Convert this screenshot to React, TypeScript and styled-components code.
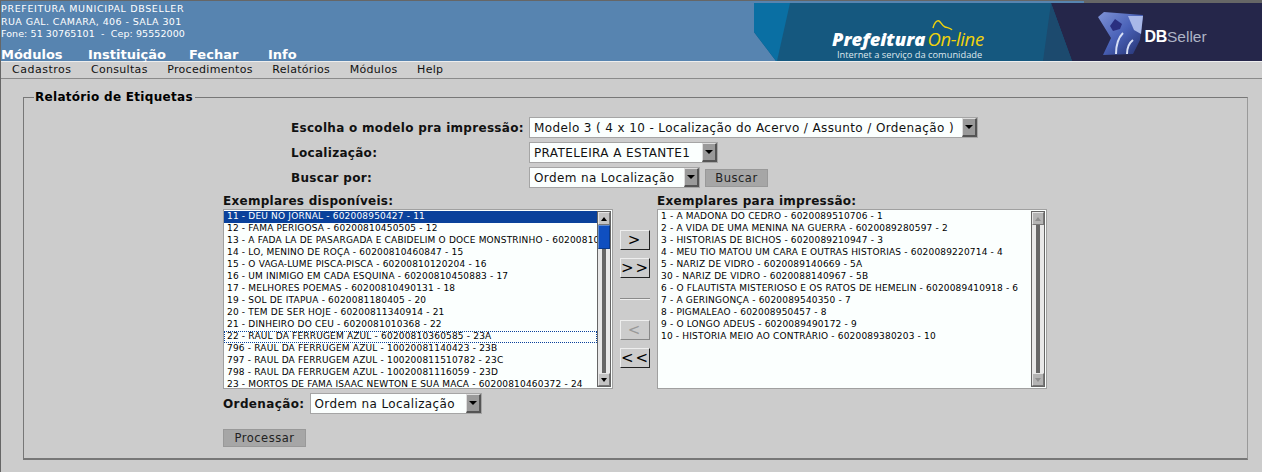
import styled, { createGlobalStyle } from 'styled-components'

const GlobalStyle = createGlobalStyle`
  html, body {
    margin: 0;
    padding: 0;
    background: #cccccc;
    font-family: "DejaVu Sans", sans-serif;
    color: #000;
  }
`

const ui = {
  Page: styled.div`
    width: 1262px;
    height: 472px;
    overflow: hidden;
    box-sizing: border-box;
    border-left: 1px solid #666;
    border-top: 1px solid #666;
    background: #cccccc;
  `,
  Header: styled.header`
    height: 60px;
    display: flex;
    justify-content: space-between;
    background: #5784b0;
  `,
  Info: styled.div`
    display: flex;
    flex-direction: column;
    justify-content: space-between;
  `,
  Address: styled.div`
    padding-top: 2px;
    display: flex;
    flex-direction: column;
  `,
  AddressLine: styled.span<{ $spacing: number }>`
    font-size: 9.5px;
    line-height: 12.6px;
    color: #fff;
    white-space: pre;
    letter-spacing: ${p => p.$spacing}px;
  `,
  TopNav: styled.nav`
    display: flex;
    height: 13px;
    font-size: 13px;
    line-height: 14px;
    font-weight: bold;
    color: #fff;
  `,
  TopNavItem: styled.span<{ $w: number }>`
    width: ${p => p.$w}px;
    flex: none;
  `,
  Banner: styled.svg`
    display: block;
    flex: none;
  `,
  MenuBar: styled.nav`
    height: 18px;
    display: flex;
    gap: 19.6px;
    padding-left: 11px;
    box-sizing: border-box;
    background: #cfcfcf;
    border-top: 1px solid #eee;
    border-bottom: 1px solid #8a8a8a;
    font-size: 11px;
    line-height: 16px;
    color: #111;
    letter-spacing: 0.3px;
    span:first-child {
      letter-spacing: 0.5px;
    }
  `,
  Fieldset: styled.fieldset`
    margin: 11px 14px 0 22px;
    padding: 0;
    height: 370px;
    box-sizing: border-box;
    border: 1px solid #777;
    border-right-color: #999;
    border-bottom: 2px solid #777;
    min-width: 0;
  `,
  Legend: styled.legend`
    margin-left: 10px;
    padding: 0 2px 0 1px;
    font-size: 12px;
    line-height: 14px;
    font-weight: bold;
    letter-spacing: 0.3px;
  `,
  Form: styled.div`
    padding: 13px 0 0 199px;
    display: flex;
    flex-direction: column;
  `,
  ChoiceRows: styled.div`
    display: flex;
    flex-direction: column;
    gap: 4px;
    margin-left: 68px;
  `,
  Row: styled.div`
    display: flex;
    align-items: center;
    gap: 5px;
  `,
  RowLabel: styled.label`
    width: 233px;
    flex: none;
    font-size: 12px;
    font-weight: bold;
    letter-spacing: 0.3px;
    color: #111;
    white-space: nowrap;
  `,
  Select: styled.div<{ $w: number }>`
    width: ${p => p.$w}px;
    height: 21px;
    box-sizing: border-box;
    display: flex;
    justify-content: space-between;
    align-items: center;
    border: 1px solid #a5a5a5;
    background: #fbfffe;
    font-size: 12px;
    letter-spacing: 0.38px;
    padding-left: 4px;
    color: #111;
    white-space: nowrap;
  `,
  Arrow: styled.span`
    width: 15px;
    height: 19px;
    flex: none;
    box-sizing: border-box;
    display: flex;
    align-items: center;
    justify-content: center;
    background: #9a9a9a;
    border-top: 1px solid #ddd;
    border-left: 1px solid #ddd;
    border-right: 2px solid #555;
    border-bottom: 2px solid #555;
    &::after {
      content: '';
      border: 4px solid transparent;
      border-top: 4px solid #000;
      border-bottom: 0;
    }
  `,
  GrayButton: styled.button<{ $w: number }>`
    width: ${p => p.$w}px;
    height: 18px;
    padding: 0;
    box-sizing: border-box;
    font-family: inherit;
    font-size: 11.5px;
    letter-spacing: 0.5px;
    line-height: 16px;
    background: #a6a6a6;
    color: #222;
    border: 1px solid #999;
  `,
  Columns: styled.div`
    display: flex;
    margin-top: 6px;
  `,
  Column: styled.div`
    display: flex;
    flex-direction: column;
    width: 390px;
  `,
  ColumnTitle: styled.div`
    font-size: 12px;
    line-height: 15px;
    height: 15px;
    font-weight: bold;
    letter-spacing: 0.27px;
    color: #111;
  `,
  ListBox: styled.div`
    height: 180px;
    box-sizing: border-box;
    display: flex;
    border: 1px solid #a0a0a0;
    background: #fbfffe;
    overflow: hidden;
  `,
  Items: styled.div`
    flex: 1;
    min-width: 0;
    padding-top: 1px;
    overflow: hidden;
  `,
  Item: styled.div<{ $selected?: boolean; $focused?: boolean }>`
    height: 12px;
    box-sizing: border-box;
    padding-left: 3px;
    font-size: 9px;
    line-height: 11px;
    letter-spacing: 0.18px;
    white-space: nowrap;
    overflow: hidden;
    color: ${p => (p.$selected ? '#fff' : '#000')};
    background: ${p => (p.$selected ? '#0a419b' : 'transparent')};
    outline: ${p => (p.$focused ? '1px dotted #0a419b' : 'none')};
    outline-offset: -1px;
  `,
  Scrollbar: styled.div`
    width: 14px;
    flex: none;
    margin: 1px 1px 1px 0;
    display: flex;
    flex-direction: column;
    align-items: stretch;
    background: #bdbdbd;
    border: 1px solid #666;
    box-sizing: border-box;
  `,
  ScrollButton: styled.div<{ $up?: boolean; $off?: boolean }>`
    height: 13px;
    flex: none;
    box-sizing: border-box;
    display: flex;
    align-items: center;
    justify-content: center;
    background: ${p => (p.$off ? '#b4b4b4' : '#c4c4c4')};
    border: 1px solid;
    border-color: #e6e6e6 #777 #777 #e6e6e6;
    &::after {
      content: '';
      border: 3px solid transparent;
      ${p => (p.$up ? 'border-bottom: 4px solid' : 'border-top: 4px solid')} ${p => (p.$off ? '#8e8e8e' : '#000')};
      ${p => (p.$up ? 'border-top: 0' : 'border-bottom: 0')};
    }
  `,
  ScrollTrack: styled.div`
    flex: 1;
    min-height: 0;
    display: flex;
    flex-direction: column;
    background: linear-gradient(90deg, #e8e8e8 0 4px, #666 4px 8px, #e8e8e8 8px);
  `,
  ScrollThumb: styled.div`
    height: 24px;
    box-sizing: border-box;
    background: #0f4fc0;
    border: 1px solid #5e8ad0;
    border-right-color: #0a3a8a;
    border-bottom-color: #0a3a8a;
  `,
  Transfer: styled.div`
    width: 44px;
    flex: none;
    display: flex;
    flex-direction: column;
    align-items: center;
    padding-top: 36px;
    box-sizing: border-box;
  `,
  MoveButton: styled.button<{ $off?: boolean; $mt: number }>`
    width: 30px;
    height: 20px;
    margin-top: ${p => p.$mt}px;
    padding: 1px 0 0;
    box-sizing: border-box;
    font-family: inherit;
    font-size: 15px;
    line-height: 17px;
    letter-spacing: 2px;
    background: #cccccc;
    color: ${p => (p.$off ? '#999' : '#000')};
    border: 1px solid;
    border-color: #eee ${p => (p.$off ? '#888' : '#222')} ${p => (p.$off ? '#888' : '#222')} #eee;
  `,
  Divider: styled.hr`
    width: 30px;
    height: 0;
    margin: 20px 0 0;
    border: 0;
    border-top: 1px solid #8a8a8a;
    border-bottom: 1px solid #eee;
  `,
  OrderRow: styled.div`
    display: flex;
    align-items: center;
    gap: 5px;
    margin-top: 4px;
  `,
  OrderLabel: styled.label`
    font-size: 12px;
    font-weight: bold;
    letter-spacing: 0.38px;
    color: #111;
  `,
  Submit: styled.div`
    margin-top: 13px;
  `
}

const available = [
  '11 - DEU NO JORNAL - 602008950427 - 11',
  '12 - FAMA PERIGOSA - 60200810450505 - 12',
  '13 - A FADA LA DE PASARGADA E CABIDELIM O DOCE MONSTRINHO - 60200810440112 - 14',
  '14 - LO, MENINO DE ROÇA - 60200810460847 - 15',
  '15 - O VAGA-LUME PISCA-PISCA - 60200810120204 - 16',
  '16 - UM INIMIGO EM CADA ESQUINA - 60200810450883 - 17',
  '17 - MELHORES POEMAS - 60200810490131 - 18',
  '19 - SOL DE ITAPUA - 6020081180405 - 20',
  '20 - TEM DE SER HOJE - 60200811340914 - 21',
  '21 - DINHEIRO DO CEU - 6020081010368 - 22',
  '22 - RAUL DA FERRUGEM AZUL - 60200810360585 - 23A',
  '796 - RAUL DA FERRUGEM AZUL - 10020081140423 - 23B',
  '797 - RAUL DA FERRUGEM AZUL - 100200811510782 - 23C',
  '798 - RAUL DA FERRUGEM AZUL - 10020081116059 - 23D',
  '23 - MORTOS DE FAMA ISAAC NEWTON E SUA MACA - 60200810460372 - 24'
]

const selectedForPrint = [
  '1 - A MADONA DO CEDRO - 6020089510706 - 1',
  '2 - A VIDA DE UMA MENINA NA GUERRA - 6020089280597 - 2',
  '3 - HISTORIAS DE BICHOS - 6020089210947 - 3',
  '4 - MEU TIO MATOU UM CARA E OUTRAS HISTORIAS - 6020089220714 - 4',
  '5 - NARIZ DE VIDRO - 6020089140669 - 5A',
  '30 - NARIZ DE VIDRO - 6020088140967 - 5B',
  '6 - O FLAUTISTA MISTERIOSO E OS RATOS DE HEMELIN - 6020089410918 - 6',
  '7 - A GERINGONÇA - 6020089540350 - 7',
  '8 - PIGMALEAO - 602008950457 - 8',
  '9 - O LONGO ADEUS - 6020089490172 - 9',
  '10 - HISTÓRIA MEIO AO CONTRÁRIO - 6020089380203 - 10'
]

const topMenu = [
  { label: 'Módulos', width: 87 },
  { label: 'Instituição', width: 101 },
  { label: 'Fechar', width: 79 },
  { label: 'Info', width: 40 }
]

const subMenu = ['Cadastros', 'Consultas', 'Procedimentos', 'Relatórios', 'Módulos', 'Help']

const address = [
  { text: 'PREFEITURA MUNICIPAL DBSELLER', spacing: 0.65 },
  { text: 'RUA GAL. CAMARA, 406 - SALA 301', spacing: 0.4 },
  { text: 'Fone: 51 30765101  -  Cep: 95552000', spacing: 0.08 }
]

const BannerArt = () => (
  <ui.Banner width="508" height="60" viewBox="754 1 508 60" aria-label="Prefeitura On-line, DBSeller">
    <defs>
      <linearGradient id="cube" x1="0" y1="0" x2="1" y2="1">
        <stop offset="0" stopColor="#7f93d6" />
        <stop offset="0.5" stopColor="#4a62b8" />
        <stop offset="1" stopColor="#23306e" />
      </linearGradient>
    </defs>
    <polygon points="1084,1 1262,1 1262,3 1084,3" fill="#666" />
    <polygon points="754,3 1262,3 1262,61 776,61 754,32" fill="#15587f" />
    <polygon points="754,3 790,3 777,61 776,61 754,32" fill="#0a6fa3" />
    <polygon points="1051,3 1262,3 1262,61 1072,61" fill="#25264a" />
    <polygon points="1051,3 1043,61 1072,61" fill="#1c4a6e" />
    <text x="832" y="46" fill="#fff" fontFamily="'Open Sans', sans-serif" fontStyle="italic" fontWeight="800" fontSize="18.4">Prefeitura</text>
    <text x="927.5" y="46" fill="#f1d30c" fontFamily="'Open Sans', sans-serif" fontStyle="italic" fontSize="18.5" letterSpacing="-0.4">On-line</text>
    <path d="M933 28c1-5 4-8 6-7s3 5 6 6 6 1 7 3" fill="none" stroke="#f1d30c" strokeWidth="1.4" />
    <text x="837" y="58" fill="#dfe8ee" fontFamily="'Open Sans', sans-serif" fontSize="9.3">Internet a serviço da comunidade</text>
    <polygon points="1098,17 1104,12 1143,15 1140,40 1133,54 1103,55 1111,38" fill="url(#cube)" />
    <polygon points="1128,16 1143,16 1141,34 1134,30" fill="#a9b8e8" />
    <polygon points="1110,26 1115,19 1122,24 1120,29 1113,31" fill="#2a2f80" />
    <path d="M1116 54c0-9 3-17 7-21M1127 54c0-6 2-11 6-14" fill="none" stroke="#d8e0f6" strokeWidth="2" />
    <text x="1144.5" y="42" fill="#fff" fontFamily="'Liberation Sans', sans-serif" fontWeight="bold" fontSize="16" letterSpacing="-0.4">DB</text>
    <text x="1167" y="42" fill="#aeb4c6" fontFamily="'Liberation Sans', sans-serif" fontSize="15.5">Seller</text>
  </ui.Banner>
)

const ListPanel = ({ title, items, active }: { title: string; items: string[]; active?: boolean }) => (
  <ui.Column>
    <ui.ColumnTitle>{title}</ui.ColumnTitle>
    <ui.ListBox>
      <ui.Items>
        {items.map((item, i) => (
          <ui.Item key={item} $selected={active && i === 0} $focused={active && i === 10}>
            {item}
          </ui.Item>
        ))}
      </ui.Items>
      <ui.Scrollbar>
        <ui.ScrollButton $up $off={!active} />
        <ui.ScrollTrack>{active && <ui.ScrollThumb />}</ui.ScrollTrack>
        <ui.ScrollButton $off={!active} />
      </ui.Scrollbar>
    </ui.ListBox>
  </ui.Column>
)

const App = () => (
  <>
    <GlobalStyle />
    <ui.Page>
      <ui.Header>
        <ui.Info>
          <ui.Address>
            {address.map(line => (
              <ui.AddressLine key={line.text} $spacing={line.spacing}>{line.text}</ui.AddressLine>
            ))}
          </ui.Address>
          <ui.TopNav>
            {topMenu.map(m => (
              <ui.TopNavItem key={m.label} $w={m.width}>{m.label}</ui.TopNavItem>
            ))}
          </ui.TopNav>
        </ui.Info>
        <BannerArt />
      </ui.Header>
      <ui.MenuBar>
        {subMenu.map(m => (
          <span key={m}>{m}</span>
        ))}
      </ui.MenuBar>
      <ui.Fieldset>
        <ui.Legend>Relatório de Etiquetas</ui.Legend>
        <ui.Form>
          <ui.ChoiceRows>
            <ui.Row>
              <ui.RowLabel>Escolha o modelo pra impressão:</ui.RowLabel>
              <ui.Select $w={449}>
                Modelo 3 ( 4 x 10 - Localização do Acervo / Assunto / Ordenação )
                <ui.Arrow />
              </ui.Select>
            </ui.Row>
            <ui.Row>
              <ui.RowLabel>Localização:</ui.RowLabel>
              <ui.Select $w={189}>
                PRATELEIRA A ESTANTE1
                <ui.Arrow />
              </ui.Select>
            </ui.Row>
            <ui.Row>
              <ui.RowLabel>Buscar por:</ui.RowLabel>
              <ui.Select $w={171}>
                Ordem na Localização
                <ui.Arrow />
              </ui.Select>
              <ui.GrayButton $w={63}>Buscar</ui.GrayButton>
            </ui.Row>
          </ui.ChoiceRows>
          <ui.Columns>
            <ListPanel title="Exemplares disponíveis:" items={available} active />
            <ui.Transfer>
              <ui.MoveButton $mt={0}>&gt;</ui.MoveButton>
              <ui.MoveButton $mt={8}>&gt;&gt;</ui.MoveButton>
              <ui.Divider />
              <ui.MoveButton $off $mt={20}>&lt;</ui.MoveButton>
              <ui.MoveButton $mt={8}>&lt;&lt;</ui.MoveButton>
            </ui.Transfer>
            <ListPanel title="Exemplares para impressão:" items={selectedForPrint} />
          </ui.Columns>
          <ui.OrderRow>
            <ui.OrderLabel>Ordenação:</ui.OrderLabel>
            <ui.Select $w={172}>
              Ordem na Localização
              <ui.Arrow />
            </ui.Select>
          </ui.OrderRow>
          <ui.Submit>
            <ui.GrayButton $w={83}>Processar</ui.GrayButton>
          </ui.Submit>
        </ui.Form>
      </ui.Fieldset>
    </ui.Page>
  </>
)

export default App
